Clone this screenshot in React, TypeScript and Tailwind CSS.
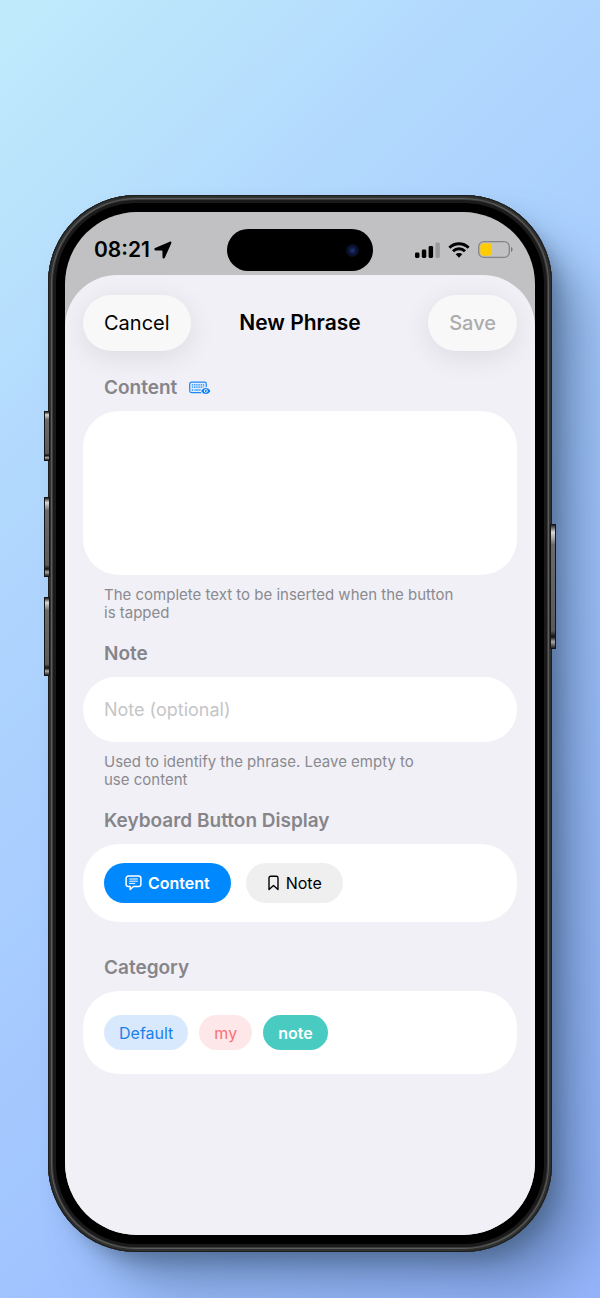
import { useState, type ReactNode } from "react";
import clsx from "clsx";

function LocationIcon() {
  return (
    <svg width="18" height="18" viewBox="0 0 18 18" fill="currentColor" aria-hidden="true">
      <path d="M15.8.7 1.100 7.100C-.1 7.700.2 9.400 1.500 9.400l6.500.1c.3 0 .4.1.4.4l.1 6.300c0 1.400 1.700 1.700 2.300.5L17.300 2.200c.4-1-.4-2-1.500-1.500Z" />
    </svg>
  );
}

function SignalIcon() {
  return (
    <svg width="25" height="16" viewBox="0 0 25 16" fill="currentColor" aria-hidden="true">
      <rect x="0" y="10.500" width="4.500" height="5.500" rx="1.400" />
      <rect x="6.800" y="7.500" width="4.500" height="8.500" rx="1.400" />
      <rect x="13.600" y="4" width="4.500" height="12" rx="1.400" />
      <rect x="20.400" y="0.500" width="4.500" height="15.500" rx="1.400" opacity="0.2" />
    </svg>
  );
}

function WifiIcon() {
  return (
    <svg width="22" height="16" viewBox="0 0 22 16" aria-hidden="true">
      <g fill="none" stroke="currentColor" strokeWidth="2.900">
        <path d="M1.400 5.700a13.600 13.600 0 0 1 19.200 0" />
        <path d="M5 9.300a8.500 8.500 0 0 1 12 0" />
      </g>
      <path d="M11 15.700 7.700 12.300a4.700 4.700 0 0 1 6.600 0Z" fill="currentColor" />
    </svg>
  );
}

function BatteryIcon() {
  return (
    <svg width="35" height="17" viewBox="0 0 35 17" aria-hidden="true">
      <rect x="0.700" y="0.700" width="30.600" height="15.600" rx="5" fill="none" stroke="#858587" strokeWidth="1.300" />
      <rect x="2.300" y="2.300" width="11.500" height="12.400" rx="3.200" fill="#ffcc00" />
      <path d="M33 6v5c1-.4 1.600-1.400 1.600-2.500S34 6.400 33 6Z" fill="#77777a" />
    </svg>
  );
}

function KeyboardEyeIcon() {
  return (
    <svg width="22" height="14" viewBox="0 0 22 14" aria-hidden="true">
      <rect x="0.700" y="1.200" width="16.600" height="10.400" rx="1.800" fill="#e3effd" stroke="#1a86f7" strokeWidth="1.200" />
      <g stroke="#1a86f7" strokeWidth="1.300" strokeDasharray="1.400 0.800">
        <path d="M2.800 3.800h12.600M2.800 6.200h12.600" />
        <path d="M2.800 9h1.300" />
      </g>
      <path d="M5.200 9h7" stroke="#1a86f7" strokeWidth="1.200" />
      <ellipse cx="16.800" cy="9.900" rx="5.200" ry="4" fill="#f2f1f6" />
      <path d="M12.200 9.900c1-1.900 2.700-3 4.600-3s3.600 1.100 4.600 3c-1 1.900-2.700 3-4.600 3s-3.600-1.100-4.600-3Z" fill="#0a7df5" />
      <circle cx="16.800" cy="9.900" r="1.500" fill="#0a7df5" stroke="#fff" strokeWidth="0.900" />
    </svg>
  );
}

function BubbleIcon() {
  return (
    <svg width="17" height="16" viewBox="0 0 17 16" fill="none" stroke="currentColor" strokeLinecap="round" strokeLinejoin="round" aria-hidden="true">
      <path d="M3.400 1h10.200a2.300 2.300 0 0 1 2.300 2.300v5.900a2.300 2.300 0 0 1-2.300 2.300H8.400l-3.200 3v-3H3.400a2.300 2.300 0 0 1-2.300-2.300V3.300A2.300 2.300 0 0 1 3.400 1Z" strokeWidth="1.500" />
      <path d="M4.600 4h7.800M4.600 6.200h7.800M4.600 8.400h5.200" strokeWidth="1" />
    </svg>
  );
}

function BookmarkIcon() {
  return (
    <svg width="13" height="16" viewBox="0 0 13 16" fill="none" stroke="currentColor" strokeWidth="1.400" strokeLinejoin="round" aria-hidden="true">
      <path d="M3.700 1.200h5.600A1.700 1.700 0 0 1 11 2.900v11.700l-4.500-4.100L2 14.600V2.900a1.700 1.700 0 0 1 1.700-1.700Z" />
    </svg>
  );
}

function StatusBar() {
  return (
    <div className="relative flex h-[63px] items-center justify-between pt-3 pr-[22px] pl-[29px]">
      <div className="flex items-center gap-1">
        <span className="text-[21px] leading-6 font-semibold">08:21</span>
        <LocationIcon />
      </div>
      {/* dynamic island */}
      <div className="absolute top-[17px] left-1/2 flex h-[42px] w-[146px] -translate-x-1/2 items-center justify-end rounded-full bg-black pr-[14px]">
        <span className="size-[13px] rounded-full bg-[radial-gradient(circle,#1d3678_0%,#0a1230_45%,#04060f_100%)]" />
      </div>
      <div className="flex items-center gap-2">
        <SignalIcon />
        <WifiIcon />
        <BatteryIcon />
      </div>
    </div>
  );
}

function Card({ children, className }: { children: ReactNode; className?: string }) {
  return <div className={clsx("mt-[11px] overflow-hidden rounded-[36px] bg-white", className)}>{children}</div>;
}

const labelClass = "text-[19px] leading-6 font-semibold text-[#85858a]";
const hintClass = "mt-[11px] px-[21px] text-[15px] leading-[18px] text-[#8a8a8f]";

function PhraseForm() {
  const [content, setContent] = useState("");
  const [note, setNote] = useState("");
  const [display, setDisplay] = useState("content");
  const [category, setCategory] = useState("note");

  return (
    <form className="flex-1 rounded-t-[52px] bg-[#f1f0f6] px-[18px] pt-5 pb-10" onSubmit={(e) => e.preventDefault()}>
      <div className="grid grid-cols-[1fr_auto_1fr] items-center">
        <button
          type="button"
          className="h-14 justify-self-start rounded-full bg-[#f8f8f9] px-[21px] text-[20px] shadow-[0_6px_28px_rgba(0,0,0,0.09)]"
        >
          Cancel
        </button>
        <h1 className="text-[21px] font-semibold">New Phrase</h1>
        <button
          type="submit"
          disabled={!content}
          className="h-14 justify-self-end rounded-full bg-[#f8f8f9] px-[21px] text-[20px] font-medium shadow-[0_6px_28px_rgba(0,0,0,0.09)] disabled:text-[#acacae]"
        >
          Save
        </button>
      </div>

      <section className="mt-[25px]">
        <div className="flex items-center gap-3 px-[21px]">
          <label htmlFor="content" className={labelClass}>
            Content
          </label>
          <button type="button" aria-label="Preview keyboard">
            <KeyboardEyeIcon />
          </button>
        </div>
        <Card>
          <textarea
            id="content"
            value={content}
            onChange={(e) => setContent(e.target.value)}
            className="block h-41 w-full resize-none px-[21px] py-5 text-[18px] outline-none"
          />
        </Card>
        <p className={hintClass}>
          The complete text to be inserted when the button
          <br />
          is tapped
        </p>
      </section>

      <section className="mt-5">
        <label htmlFor="note" className={clsx("block px-[21px]", labelClass)}>
          Note
        </label>
        <Card>
          <input
            id="note"
            type="text"
            placeholder="Note (optional)"
            value={note}
            onChange={(e) => setNote(e.target.value)}
            className="block h-[65px] w-full px-[21px] text-[18px] outline-none placeholder:text-[#c5c5c7]"
          />
        </Card>
        <p className={hintClass}>
          Used to identify the phrase. Leave empty to
          <br />
          use content
        </p>
      </section>

      <section className="mt-5">
        <h2 className={clsx("px-[21px]", labelClass)}>Keyboard Button Display</h2>
        <Card className="flex gap-[15px] px-[21px] py-[19px]">
          <button
            type="button"
            aria-pressed={display === "content"}
            onClick={() => setDisplay("content")}
            className={clsx(
              "flex h-10 items-center gap-[6px] rounded-full px-[21px] text-[16px]",
              display === "content" ? "bg-[#0088ff] font-semibold text-white" : "bg-[#efefef]",
            )}
          >
            <BubbleIcon />
            Content
          </button>
          <button
            type="button"
            aria-pressed={display === "note"}
            onClick={() => setDisplay("note")}
            className={clsx(
              "flex h-10 items-center gap-[6px] rounded-full px-[21px] text-[16px]",
              display === "note" ? "bg-[#0088ff] font-semibold text-white" : "bg-[#efefef]",
            )}
          >
            <BookmarkIcon />
            Note
          </button>
        </Card>
      </section>

      <section className="mt-[34px]">
        <h2 className={clsx("px-[21px]", labelClass)}>Category</h2>
        <Card className="flex gap-[11px] px-[21px] py-6">
          <button
            type="button"
            onClick={() => setCategory("default")}
            className={clsx(
              "h-[35px] rounded-full px-[15px] text-[16px]",
              category === "default" ? "bg-[#1a80ee] font-semibold text-white" : "bg-[#d9e9fd] text-[#1a80ee]",
            )}
          >
            Default
          </button>
          <button
            type="button"
            onClick={() => setCategory("my")}
            className={clsx(
              "h-[35px] rounded-full px-[15px] text-[16px]",
              category === "my" ? "bg-[#fb6f74] font-semibold text-white" : "bg-[#fee7e8] text-[#fb6f74]",
            )}
          >
            my
          </button>
          <button
            type="button"
            onClick={() => setCategory("note")}
            className={clsx(
              "h-[35px] rounded-full px-[15px] text-[16px]",
              category === "note" ? "bg-[#4acbc1] font-semibold text-white" : "bg-[#def6f4] text-[#4acbc1]",
            )}
          >
            note
          </button>
        </Card>
      </section>
    </form>
  );
}

const sideKey =
  "absolute w-[6px] border border-[#151515] bg-[linear-gradient(180deg,#222_0%,#d9d9d9_6%,#6a6a6a_16%,#5a5a5a_86%,#111_91%,#aaa_95%,#222_100%)]";

function App() {
  return (
    <main className="flex min-h-screen flex-col overflow-hidden bg-[linear-gradient(135deg,#c0ebfb_0%,#b0d6fe_30%,#a1c4ff_68%,#95b4fb_100%)] px-12 pt-[195px] pb-[46px] font-[Inter,'Liberation_Sans',sans-serif] text-black">
      <div className="relative flex flex-1 flex-col">
        <div className="relative flex flex-1 flex-col rounded-[88px] bg-black p-[17px] shadow-[inset_0_0_0_1px_#1c1d1d,inset_0_0_0_3px_#303131,inset_0_0_0_4px_#5b5c5b,inset_0_0_0_5px_#3a3a3a,inset_0_0_0_8px_#1a1a1a,12px_14px_22px_-6px_rgba(45,70,95,0.5),44px_44px_50px_-8px_rgba(70,100,145,0.5)]">
          <div className="flex flex-1 flex-col overflow-hidden rounded-[72px] bg-[#c1c1c3]">
            <StatusBar />
            <PhraseForm />
          </div>
        </div>

        {/* volume and power keys */}
        <span className={clsx(sideKey, "top-[216px] -left-1 h-[50px]")} />
        <span className={clsx(sideKey, "top-[302px] -left-1 h-[80px]")} />
        <span className={clsx(sideKey, "top-[402px] -left-1 h-[79px]")} />
        <span className={clsx(sideKey, "top-[329px] -right-1 h-[125px]")} />
      </div>
    </main>
  );
}

export default App;
